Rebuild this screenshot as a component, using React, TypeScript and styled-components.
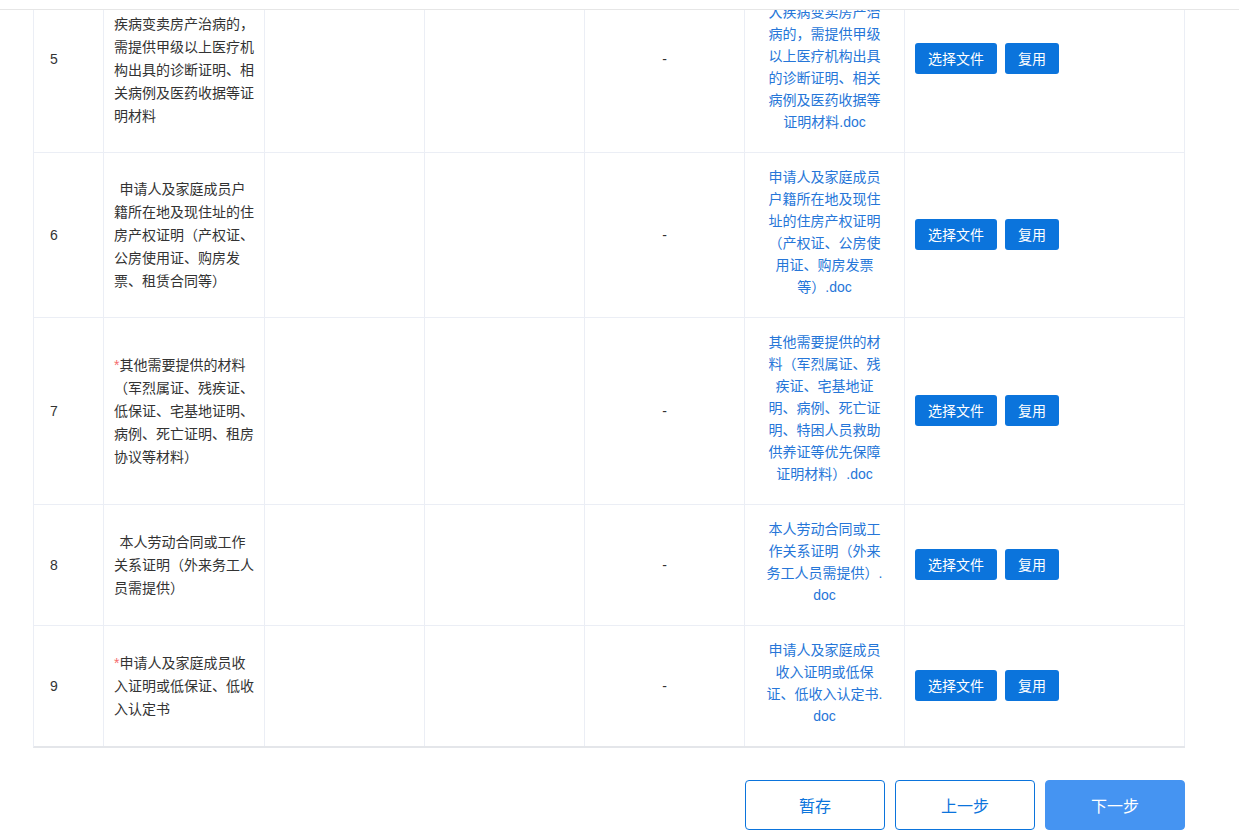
import { useLayoutEffect, useRef } from "react";
import styled, { createGlobalStyle } from "styled-components";

const GlobalStyle = createGlobalStyle`
  html, body {
    margin: 0;
    padding: 0;
    height: 100%;
    background: #fff;
  }
  body {
    font-family: "Liberation Sans", "Noto Sans CJK SC", sans-serif;
    color: #333;
  }
  #root {
    height: 100%;
  }
`;

const Page = styled.div`
  display: flex;
  flex-direction: column;
  height: 100vh;
`;
const TopBar = styled.div`
  flex: none;
  height: 9px;
  border-bottom: 1px solid #e6e6e6;
`;
const Scroller = styled.div`
  flex: 1;
  overflow-y: auto;
  scrollbar-width: none;
  &::-webkit-scrollbar {
    display: none;
  }
`;
const Content = styled.div`
  padding: 0 54px 5px 33px;
`;
const Table = styled.table`
  width: 100%;
  table-layout: fixed;
  border-collapse: separate;
  border-spacing: 0;
  border-left: 1px solid #ebeef5;
  border-bottom: 2px solid #e4e6ea;
  font-size: 14px;
`;
const Th = styled.th<{ $center?: boolean }>`
  height: 50px;
  padding: 0 10px;
  background: #f5f7fa;
  border-right: 1px solid #ebeef5;
  border-bottom: 1px solid #ebeef5;
  border-top: 1px solid #ebeef5;
  color: #606266;
  font-weight: bold;
  text-align: ${(p) => (p.$center ? "center" : "left")};
`;
const Row = styled.tr`
  &:last-child td {
    border-bottom: none;
  }
`;
const Cell = styled.td<{ $center?: boolean; $pad?: string }>`
  box-sizing: border-box;
  padding: ${(p) => p.$pad ?? "0 10px"};
  border-right: 1px solid #ebeef5;
  border-bottom: 1px solid #ebeef5;
  vertical-align: middle;
  text-align: ${(p) => (p.$center ? "center" : "left")};
  color: #333;
  line-height: 23px;
`;
const Star = styled.span<{ $hidden?: boolean }>`
  color: #f56c6c;
  visibility: ${(p) => (p.$hidden ? "hidden" : "visible")};
`;
const FileLink = styled.a`
  display: block;
  color: #2676d8;
  line-height: 22px;
  text-align: center;
  word-break: break-all;
  text-decoration: none;
  cursor: pointer;
`;
const Ops = styled.div`
  display: flex;
  gap: 8px;
  margin-top: -2px;
`;
const SmallBtn = styled.button`
  height: 31px;
  padding: 0 13px;
  border: none;
  border-radius: 3px;
  background: #0b74dc;
  color: #fff;
  font-family: inherit;
  font-size: 14px;
  cursor: pointer;
`;
const Actions = styled.div`
  display: flex;
  justify-content: flex-end;
  gap: 10px;
  margin-top: 32px;
`;
const BigBtn = styled.button<{ $primary?: boolean }>`
  box-sizing: border-box;
  width: 140px;
  height: 50px;
  border: 1px solid ${(p) => (p.$primary ? "#4594f2" : "#0b74dc")};
  border-radius: 4px;
  background: ${(p) => (p.$primary ? "#4594f2" : "#fff")};
  color: ${(p) => (p.$primary ? "#fff" : "#0b74dc")};
  font-family: inherit;
  font-size: 16px;
  cursor: pointer;
`;

interface Material {
  no: number;
  required: boolean;
  name: string;
  file: string;
}

const materials: Material[] = [
  {
    no: 5,
    required: false,
    name: "家庭成员因患有重大疾病变卖房产治病的，需提供甲级以上医疗机构出具的诊断证明、相关病例及医药收据等证明材料",
    file: "家庭成员因患有重大疾病变卖房产治病的，需提供甲级以上医疗机构出具的诊断证明、相关病例及医药收据等证明材料.doc",
  },
  {
    no: 6,
    required: false,
    name: "申请人及家庭成员户籍所在地及现住址的住房产权证明（产权证、公房使用证、购房发票、租赁合同等）",
    file: "申请人及家庭成员户籍所在地及现住址的住房产权证明（产权证、公房使用证、购房发票等）.doc",
  },
  {
    no: 7,
    required: true,
    name: "其他需要提供的材料（军烈属证、残疾证、低保证、宅基地证明、病例、死亡证明、租房协议等材料）",
    file: "其他需要提供的材料（军烈属证、残疾证、宅基地证明、病例、死亡证明、特困人员救助供养证等优先保障证明材料）.doc",
  },
  {
    no: 8,
    required: false,
    name: "本人劳动合同或工作关系证明（外来务工人员需提供）",
    file: "本人劳动合同或工作关系证明（外来务工人员需提供）.doc",
  },
  {
    no: 9,
    required: true,
    name: "申请人及家庭成员收入证明或低保证、低收入认定书",
    file: "申请人及家庭成员收入证明或低保证、低收入认定书.doc",
  },
];

const App = () => {
  const scrollRef = useRef<HTMLDivElement>(null);

  useLayoutEffect(() => {
    const el = scrollRef.current;
    if (!el) return;
    const toEnd = () => {
      el.scrollTop = el.scrollHeight;
    };
    toEnd();
    document.fonts?.ready.then(toEnd);
  }, []);

  return (
    <Page>
      <GlobalStyle />
      <TopBar />
      <Scroller ref={scrollRef}>
        <Content>
          <Table>
            <colgroup>
              <col style={{ width: 70 }} />
              <col style={{ width: 161 }} />
              <col style={{ width: 160 }} />
              <col style={{ width: 160 }} />
              <col style={{ width: 160 }} />
              <col style={{ width: 160 }} />
              <col />
            </colgroup>
            <thead>
              <tr>
                <Th>序号</Th>
                <Th>材料名称</Th>
                <Th $center>材料类型</Th>
                <Th $center>上传方式</Th>
                <Th $center>已上传文件</Th>
                <Th $center>模板</Th>
                <Th>操作</Th>
              </tr>
            </thead>
            <tbody>
              {materials.map((m) => (
                <Row key={m.no}>
                  <Cell $pad="0 10px 0 16px">{m.no}</Cell>
                  <Cell>
                    <Star $hidden={!m.required}>*</Star>
                    {m.name}
                  </Cell>
                  <Cell />
                  <Cell />
                  <Cell $center>-</Cell>
                  <Cell $pad="13px 19px 19px">
                    <FileLink>{m.file}</FileLink>
                  </Cell>
                  <Cell>
                    <Ops>
                      <SmallBtn>选择文件</SmallBtn>
                      <SmallBtn>复用</SmallBtn>
                    </Ops>
                  </Cell>
                </Row>
              ))}
            </tbody>
          </Table>
          <Actions>
            <BigBtn>暂存</BigBtn>
            <BigBtn>上一步</BigBtn>
            <BigBtn $primary>下一步</BigBtn>
          </Actions>
        </Content>
      </Scroller>
    </Page>
  );
};

export default App;
